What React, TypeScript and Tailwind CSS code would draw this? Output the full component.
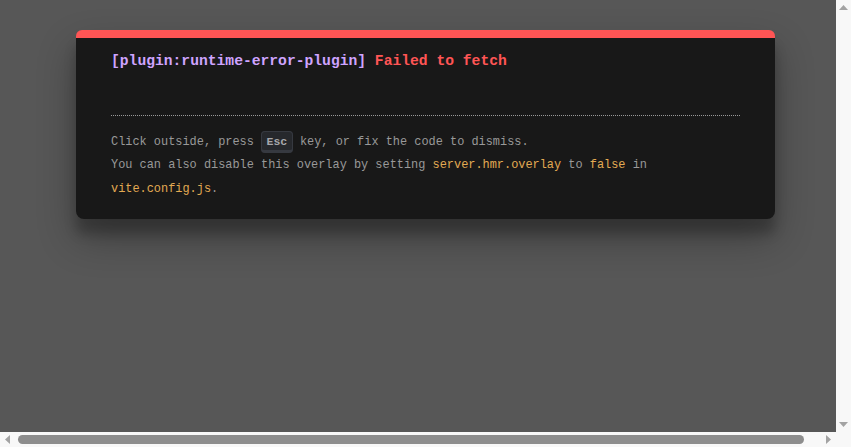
import React from "react";

const mono = "font-['Liberation_Mono','DejaVu_Sans_Mono',monospace]";

function UpArrow() {
  return (
    <svg width="9" height="5" viewBox="0 0 9 5">
      <polygon points="4.5,0 9,5 0,5" fill="#a3a3a3" />
    </svg>
  );
}
function DownArrow() {
  return (
    <svg width="9" height="5" viewBox="0 0 9 5">
      <polygon points="0,0 9,0 4.5,5" fill="#a3a3a3" />
    </svg>
  );
}
function LeftArrow() {
  return (
    <svg width="5" height="9" viewBox="0 0 5 9">
      <polygon points="5,0 5,9 0,4.5" fill="#a3a3a3" />
    </svg>
  );
}
function RightArrow() {
  return (
    <svg width="5" height="9" viewBox="0 0 5 9">
      <polygon points="0,0 5,4.5 0,9" fill="#a3a3a3" />
    </svg>
  );
}

function ErrorWindow() {
  return (
    <div
      className={`${mono} mt-[30px] ml-[76px] w-[699px] bg-[#181818] border-t-[8px] border-[#ff5555] rounded-t-[6px] rounded-b-[8px] px-[35px] pt-[13px] pb-[18px] shadow-[0_19px_38px_rgba(0,0,0,0.30),0_15px_12px_rgba(0,0,0,0.22)] overflow-hidden`}
    >
      <div className="text-[14.67px] leading-[20.8px] font-bold whitespace-pre">
        <span className="text-[#cfa4ff]">[plugin:runtime-error-plugin]</span>{" "}
        <span className="text-[#ff5555]">Failed to fetch</span>
      </div>
      <div className="mt-[43px] border-t border-dotted border-[#999] pt-[15px] text-[11.92px] leading-[23.4px] text-[#999] whitespace-pre">
        <div>
          Click outside, press{" "}
          <kbd
            className={`${mono} text-[11.5px] font-bold bg-[rgb(38,40,44)] text-[rgb(166,167,171)] px-[4.5px] py-[2.6px] rounded-[4px] border-[rgb(54,57,64)] border-t border-x border-b-[3px] leading-[1.5]`}
          >
            Esc
          </kbd>{" "}
          key, or fix the code to dismiss.
        </div>
        <div>
          You can also disable this overlay by setting{" "}
          <span className="text-[#e2aa53]">server.hmr.overlay</span> to{" "}
          <span className="text-[#e2aa53]">false</span> in
        </div>
        <div>
          <span className="text-[#e2aa53]">vite.config.js</span>.
        </div>
      </div>
    </div>
  );
}

export default function App() {
  return (
    <div className="flex w-[866px] h-[447px] bg-white overflow-hidden">
      <div className="flex flex-col w-[851px] h-[447px]">
        <div className="flex h-[432px]">
          <div className="w-[836px] h-[432px] bg-[#575757] overflow-hidden">
            <ErrorWindow />
          </div>
          <div className="w-[15px] h-[432px] bg-[#f8f8f8] flex flex-col justify-between items-center">
            <div className="h-[15px] flex items-center justify-center">
              <UpArrow />
            </div>
            <div className="h-[15px] flex items-center justify-center">
              <DownArrow />
            </div>
          </div>
        </div>
        <div className="flex h-[15px]">
          <div className="w-[836px] h-[15px] bg-[#f8f8f8] flex items-center">
            <div className="w-[15px] h-[15px] flex items-center justify-center">
              <LeftArrow />
            </div>
            <div className="flex-1 h-[15px] flex items-center">
              <div className="ml-[3px] w-[786px] h-[9px] rounded-full bg-[#8d8d8d]" />
            </div>
            <div className="w-[15px] h-[15px] flex items-center justify-center">
              <RightArrow />
            </div>
          </div>
          <div className="w-[15px] h-[15px] bg-[#f8f8f8]" />
        </div>
      </div>
    </div>
  );
}
